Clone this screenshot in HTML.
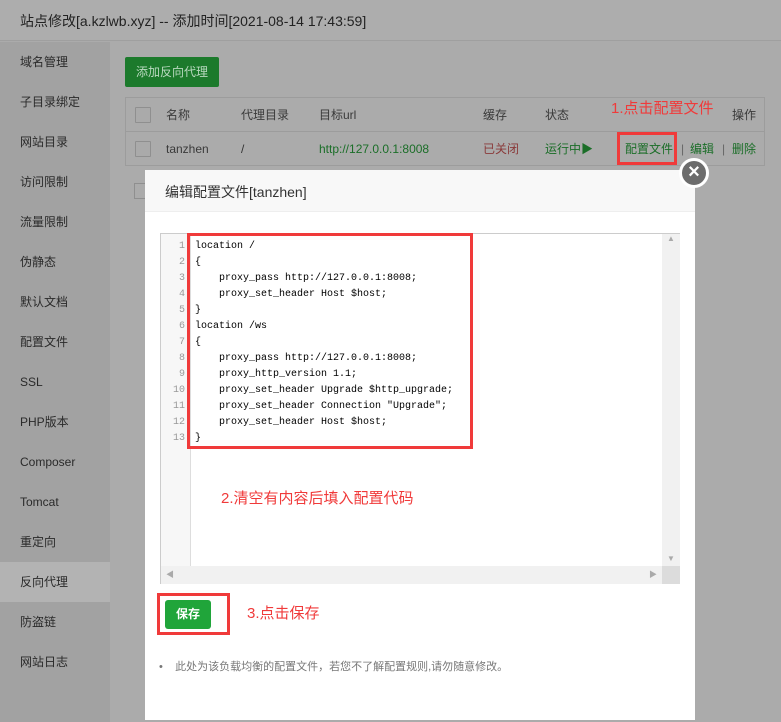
<!DOCTYPE html>
<html><head><meta charset="utf-8"><style>
*{margin:0;padding:0;box-sizing:border-box}
body{width:781px;height:722px;overflow:hidden;background:#ababab;font-family:"Liberation Sans","Noto Sans CJK SC",sans-serif;font-size:12px;color:#333;position:relative}
.abs{position:absolute}
.hdr{left:0;top:0;width:781px;height:41px;background:#adadad;border-bottom:1px solid #9f9f9f;font-size:14px;color:#222;padding:11px 0 0 20px}
.side{left:0;top:42px;width:110px;height:680px;background:#a2a2a2}
.side div{height:40px;line-height:40px;padding-left:20px;color:#2a2a2a;font-size:12px}
.side .act{background:#b3b3b3}
.btn{left:125px;top:57px;width:94px;height:30px;background:#1c7a2c;color:#b9d9bf;border-radius:2px;text-align:center;line-height:30px;font-size:12px}
.tbl{left:125px;top:97px;width:640px;height:69px;border:1px solid #9c9c9c}
.row{position:absolute;left:0;width:638px;height:34px;line-height:34px}
.cb{position:absolute;left:9px;top:9px;width:16px;height:16px;border:1px solid #8f8f8f;background:#aaa;border-radius:1px}
.t{position:absolute;white-space:nowrap}
.modal{left:145px;top:170px;width:550px;height:550px;background:#fff}
.mh{left:0;top:0;width:550px;height:42px;background:#f8f8f8;border-bottom:1px solid #eee;font-size:14px;color:#333;padding:12px 0 0 20px}
.ed{left:15px;top:63px;width:520px;height:351px;border:1px solid #ccc;background:#fff}
.gut{left:0;top:0;width:30px;height:332px;background:#f7f7f7;border-right:1px solid #ddd}
.code{font-family:"Liberation Mono","Noto Serif CJK SC",monospace;font-size:10px;line-height:16px;color:#000}
.num{color:#999;text-align:right;width:24px}
.red{border:3px solid #f03a3a}
.note{color:#f03a3a;font-size:15px}
.close{left:679px;top:158px;width:30px;height:30px;border-radius:50%;background:#6c6c6c;border:3px solid #fff;color:#fff;text-align:center;line-height:22px;font-size:20px;font-weight:bold}
</style></head><body>
<div class="abs hdr">站点修改[a.kzlwb.xyz] -- 添加时间[2021-08-14 17:43:59]</div>
<div class="abs side">
<div>域名管理</div><div>子目录绑定</div><div>网站目录</div><div>访问限制</div><div>流量限制</div><div>伪静态</div><div>默认文档</div><div>配置文件</div><div>SSL</div><div>PHP版本</div><div>Composer</div><div>Tomcat</div><div>重定向</div><div class="act">反向代理</div><div>防盗链</div><div>网站日志</div>
</div>
<div class="abs btn">添加反向代理</div>
<div class="abs tbl">
<div class="row" style="top:0;border-bottom:1px solid #9c9c9c;color:#3a3a3a">
<div class="cb"></div><span class="t" style="left:40px">名称</span><span class="t" style="left:115px">代理目录</span><span class="t" style="left:193px">目标url</span><span class="t" style="left:357px">缓存</span><span class="t" style="left:419px">状态</span><span class="t" style="left:606px">操作</span>
</div>
<div class="row" style="top:34px">
<div class="cb"></div><span class="t" style="left:40px;color:#3a3a3a">tanzhen</span><span class="t" style="left:115px">/</span><span class="t" style="left:193px;color:#1b6e28">http://127.0.0.1:8008</span><span class="t" style="left:357px;color:#8a3a3a">已关闭</span><span class="t" style="left:419px;color:#1b6e28">运行中▶</span><span class="t" style="left:499px;color:#1b6e28">配置文件</span><span class="t" style="left:555px;color:#666">|</span><span class="t" style="left:564px;color:#1b6e28">编辑</span><span class="t" style="left:596px;color:#666">|</span><span class="t" style="left:606px;color:#1b6e28">删除</span>
</div>
</div>
<div class="abs red" style="left:617px;top:132px;width:60px;height:33px"></div>
<div class="abs note" style="left:611px;top:97px">1.点击配置文件</div>
<div class="abs" style="left:134px;top:183px;width:16px;height:16px;border:1px solid #8f8f8f"></div>
<div class="abs modal">
<div class="abs mh">编辑配置文件[tanzhen]</div>
<div class="abs ed">
<div class="abs gut"></div>
<div class="abs code num" style="left:0;top:5px">1<br>2<br>3<br>4<br>5<br>6<br>7<br>8<br>9<br>10<br>11<br>12<br>13</div>
<div class="abs code" style="left:34px;top:5px;white-space:pre">location /
{
    proxy_pass http://127.0.0.1:8008;
    proxy_set_header Host $host;
}
location /ws
{
    proxy_pass http://127.0.0.1:8008;
    proxy_http_version 1.1;
    proxy_set_header Upgrade $http_upgrade;
    proxy_set_header Connection "Upgrade";
    proxy_set_header Host $host;
}</div>
<div class="abs" style="left:501px;top:0;width:18px;height:332px;background:#f1f1f1;color:#aaa;font-size:8px;text-align:center">▲<div style="position:absolute;bottom:3px;width:18px">▼</div></div>
<div class="abs" style="left:0;top:332px;width:519px;height:18px;background:#f1f1f1;color:#aaa;font-size:8px;line-height:18px;padding-left:5px">◀<span style="position:absolute;left:488px">▶</span><span style="position:absolute;left:501px;top:0;width:18px;height:18px;background:#dcdcdc"></span></div>
</div>
<div class="abs red" style="left:42px;top:63px;width:286px;height:216px"></div>
<div class="abs note" style="left:76px;top:317px">2.清空有内容后填入配置代码</div>
<div class="abs" style="left:20px;top:430px;width:46px;height:29px;background:#20a53a;border-radius:3px;color:#fff;text-align:center;line-height:29px;font-weight:bold">保存</div>
<div class="abs red" style="left:12px;top:423px;width:73px;height:42px"></div>
<div class="abs note" style="left:102px;top:432px">3.点击保存</div>
<div class="abs" style="left:14px;top:488px;color:#777;font-size:11px">•&nbsp;&nbsp;&nbsp;&nbsp;此处为该负载均衡的配置文件，若您不了解配置规则,请勿随意修改。</div>
</div>
<div class="abs close">×</div>
</body></html>
